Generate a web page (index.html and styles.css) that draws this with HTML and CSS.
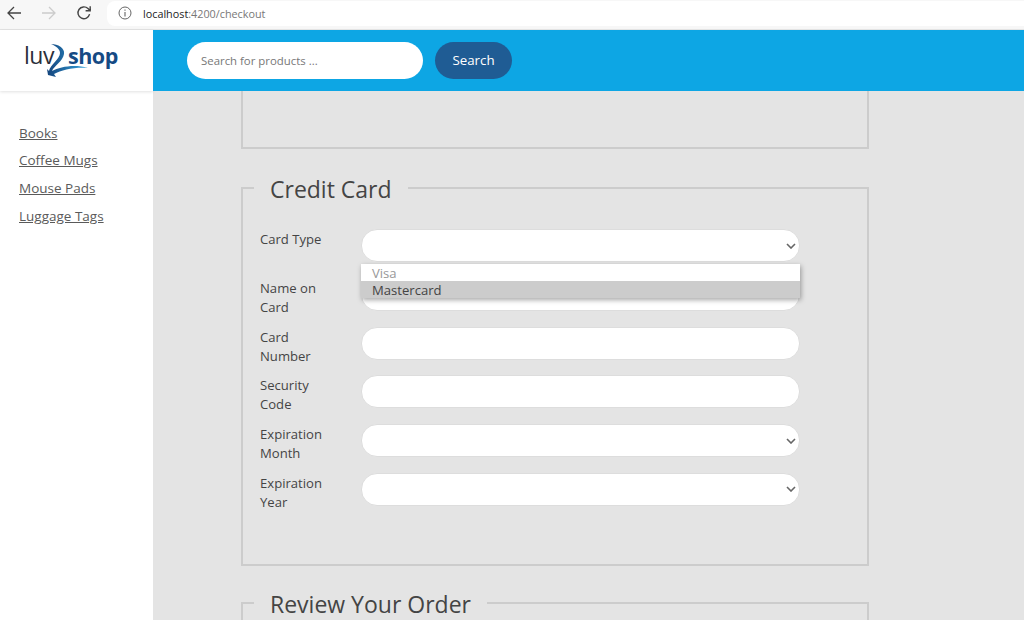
FILE: index.html
```html
<!DOCTYPE html>
<html lang="en">
<head>
    <meta charset="UTF-8">
    <meta name="viewport" content="width=device-width, initial-scale=1.0">
    <title>Checkout</title>
    <link rel="stylesheet" href="styles.css">
</head>
<body>
    <div class="browser-bar">
        <svg class="nav-icon" width="16" height="16" viewBox="0 0 16 16"><path d="M15 8H2M8 2L2 8l6 6" fill="none" stroke="#444" stroke-width="1.3"/></svg>
        <svg class="nav-icon" width="16" height="16" viewBox="0 0 16 16"><path d="M1 8h13M8 2l6 6-6 6" fill="none" stroke="#ccc" stroke-width="1.3"/></svg>
        <svg class="nav-icon" width="16" height="16" viewBox="0 0 16 16"><path d="M13.6 9.2A5.9 5.9 0 1 1 12 3.6L14 5.5M14.2 1.2v4.6H9.6" fill="none" stroke="#444" stroke-width="1.4"/></svg>
        <div class="url-pill">
            <svg width="14" height="14" viewBox="0 0 14 14"><circle cx="7" cy="7" r="6" fill="none" stroke="#666" stroke-width="1"/><path d="M7 6v4.4M7 3.6v1.2" stroke="#666" stroke-width="1.1"/></svg>
            <span class="url"><b>localhost</b>:4200/checkout</span>
        </div>
    </div>

    <div class="page">
        <aside class="sidebar">
            <div class="logo">
                <svg width="100" height="42" viewBox="0 -4 100 42">
                    <defs>
                        <linearGradient id="swoosh" x1="0" y1="0" x2="1" y2="0">
                            <stop offset="0" stop-color="#14447c"/>
                            <stop offset="1" stop-color="#35a6e0"/>
                        </linearGradient>
                    </defs>
                    <text class="logo-luv" x="0" y="21">luv</text>
                    <path d="M27 1C34 1 41 5 40 11C39 18 30 23 28 28C36 24 50 21 64 25C50 24 38 27 30 31L32 34L24 32L23 26L25 28C26 22 36 16 36 10C36 6 32 3 27 1Z" fill="url(#swoosh)"/>
                    <text class="logo-shop" x="44" y="21">shop</text>
                </svg>
            </div>
            <nav class="side-nav">
                <a href="#">Books</a>
                <a href="#">Coffee Mugs</a>
                <a href="#">Mouse Pads</a>
                <a href="#">Luggage Tags</a>
            </nav>
        </aside>

        <div class="content">
            <header class="topbar">
                <input class="search-input" type="text" placeholder="Search for products ...">
                <button class="search-btn">Search</button>
            </header>

            <main class="main">
                <fieldset class="box box-cut"></fieldset>

                <fieldset class="box card-box">
                    <legend>Credit Card</legend>
                    <div class="form-row">
                        <label>Card Type</label>
                        <div class="field">
                            <select></select>
                            <ul class="dropdown">
                                <li class="muted">Visa</li>
                                <li class="active">Mastercard</li>
                            </ul>
                        </div>
                    </div>
                    <div class="form-row">
                        <label>Name on Card</label>
                        <div class="field"><input type="text"></div>
                    </div>
                    <div class="form-row">
                        <label>Card Number</label>
                        <div class="field"><input type="text"></div>
                    </div>
                    <div class="form-row">
                        <label>Security Code</label>
                        <div class="field"><input type="text"></div>
                    </div>
                    <div class="form-row">
                        <label>Expiration Month</label>
                        <div class="field"><select></select></div>
                    </div>
                    <div class="form-row">
                        <label>Expiration Year</label>
                        <div class="field"><select></select></div>
                    </div>
                </fieldset>

                <fieldset class="box">
                    <legend>Review Your Order</legend>
                </fieldset>
            </main>
        </div>
    </div>
</body>
</html>
```

FILE: styles.css
```css
* {
    box-sizing: border-box;
}
html, body {
    height: 100%;
}
body {
    margin: 0;
    overflow: hidden;
    display: flex;
    flex-direction: column;
    font-family: "Open Sans", "Noto Sans", sans-serif;
    color: #444;
    background-color: #e4e4e4;
}

/* browser chrome */
.browser-bar {
    height: 30px;
    flex-shrink: 0;
    display: flex;
    align-items: center;
    padding: 0 0 3px 6px;
    background-color: #f7f7f7;
    border-bottom: 1px solid #e4e4e4;
}
.nav-icon {
    margin-right: 19px;
}
.nav-icon:nth-child(3) {
    margin-right: 15px;
}
.url-pill {
    flex: 1;
    height: 25px;
    display: flex;
    align-items: center;
    gap: 11px;
    padding-left: 11px;
    background-color: #fff;
    border-radius: 8px 0 0 8px;
}
.url {
    font-size: 10.8px;
    color: #777;
}
.url b {
    font-weight: normal;
    color: #222;
}

.page {
    flex: 1;
    display: flex;
    min-height: 0;
}

/* sidebar */
.sidebar {
    width: 153px;
    flex-shrink: 0;
    background-color: #fff;
}
.logo {
    height: 61px;
    padding: 9px 0 0 24px;
    box-shadow: 0 1px 3px rgba(0, 0, 0, 0.12);
}
.logo-luv {
    font-size: 23px;
    fill: #2b2f3a;
    letter-spacing: -0.5px;
}
.logo-shop {
    font-size: 21.5px;
    font-weight: 700;
    fill: #154a84;
    letter-spacing: -0.5px;
}
.side-nav {
    display: flex;
    flex-direction: column;
    gap: 8px;
    padding: 32.6px 0 0 19px;
}
.side-nav a {
    font-size: 13.5px;
    line-height: 19.7px;
    color: #5a5a5a;
}

/* top search bar */
.content {
    flex: 1;
    min-width: 0;
    display: flex;
    flex-direction: column;
}
.topbar {
    height: 61px;
    flex-shrink: 0;
    display: flex;
    align-items: center;
    gap: 12px;
    padding-left: 34px;
    background-color: #0da6e4;
}
.search-input {
    width: 236px;
    height: 37px;
    padding: 0 14px 1px;
    border: none;
    border-radius: 19px;
    font: inherit;
    font-size: 11.4px;
}
.search-input::placeholder {
    color: #777;
}
.search-btn {
    width: 77px;
    height: 37px;
    padding-bottom: 3px;
    border: none;
    border-radius: 19px;
    background-color: #1f5c94;
    color: #fff;
    font: inherit;
    font-size: 13.3px;
}

/* form */
.main {
    flex: 1;
    min-height: 0;
    overflow: hidden;
    padding-left: 88px;
}
.box {
    width: 628px;
    margin: 0;
    padding: 0 17px;
    border: 2px solid #ccc;
}
.box legend {
    margin-left: -6px;
    padding: 2px 16px 0;
    font-size: 23px;
    line-height: 32px;
    color: #444;
}
.box-cut {
    height: 58px;
    border-top: none;
    margin-bottom: 22px;
}
.card-box {
    height: 395px;
    padding-top: 24px;
    margin-bottom: 20px;
}
.form-row {
    display: flex;
    height: 48.8px;
}
.form-row label {
    width: 101px;
    flex-shrink: 0;
    padding: 1px 30px 0 0;
    font-size: 13.1px;
    line-height: 19px;
}
.field {
    position: relative;
    width: 439px;
}
.field input, .field select {
    display: block;
    width: 100%;
    height: 33px;
    background-color: #fff;
    border: 1px solid #ddd;
    border-radius: 16px;
}
.field select {
    appearance: none;
    background-image: url("data:image/svg+xml,%3Csvg xmlns='http://www.w3.org/2000/svg' width='10' height='6'%3E%3Cpath d='M1 1l4 4 4-4' fill='none' stroke='%23666' stroke-width='1.6'/%3E%3C/svg%3E");
    background-repeat: no-repeat;
    background-position: right 3px center;
}
.dropdown {
    position: absolute;
    z-index: 2;
    top: 35px;
    left: 0;
    width: 100%;
    margin: 0;
    padding: 0;
    list-style: none;
    font-size: 13.1px;
    line-height: 16px;
    background-color: #fff;
    box-shadow: 1px 2px 5px rgba(0, 0, 0, 0.35);
}
.dropdown li {
    padding: 1px 0 0 11px;
}
.dropdown .muted {
    color: #999;
}
.dropdown .active {
    background-color: #ccc;
}
```
